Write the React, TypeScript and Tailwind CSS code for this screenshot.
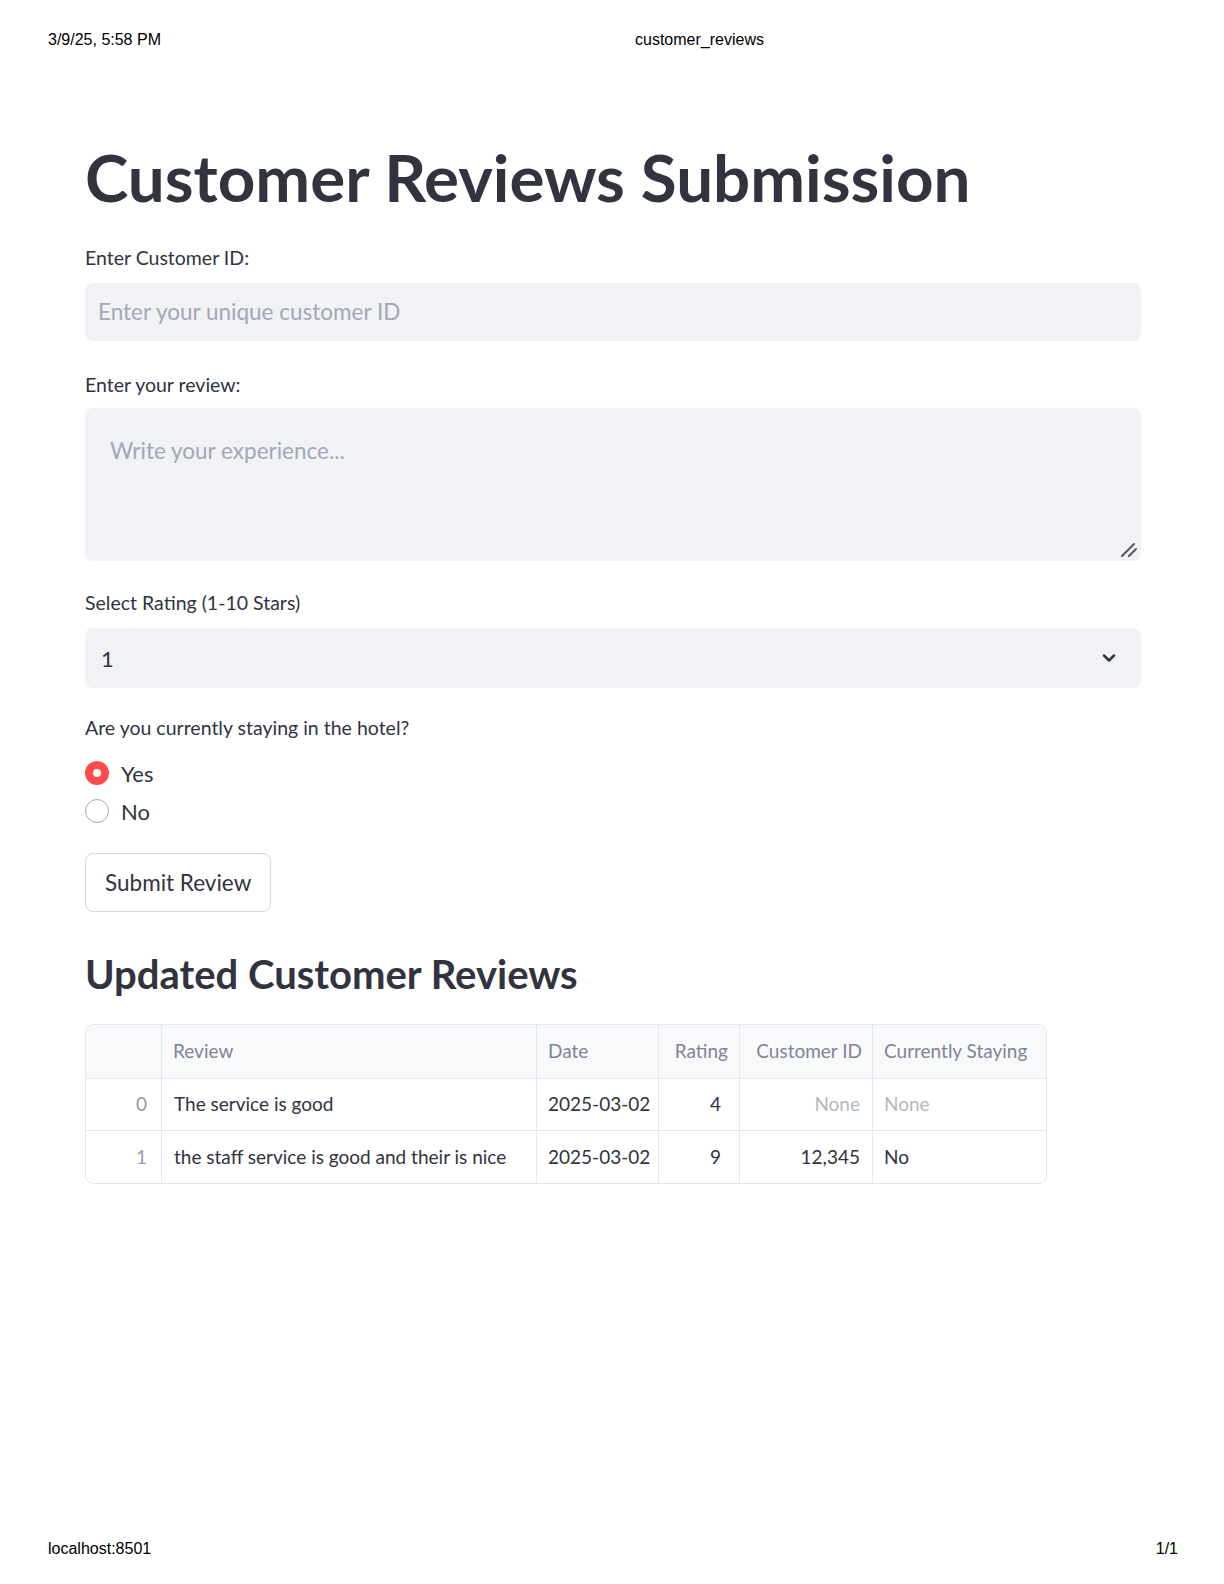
import { ChevronDown } from "lucide-react";

const font = { fontFamily: "Lato, 'Noto Sans', sans-serif" };
const chrome = { fontFamily: "'Liberation Sans', Arial, sans-serif" };

const rows = [
  { idx: 0, review: "The service is good", date: "2025-03-02", rating: 4, id: null, staying: null },
  { idx: 1, review: "the staff service is good and their is nice", date: "2025-03-02", rating: 9, id: "12,345", staying: "No" },
];

function Label({ children }: { children: React.ReactNode }) {
  return <div className="text-[19.5px] leading-[24px] text-[#31333f]">{children}</div>;
}

function Radio({ checked, label }: { checked?: boolean; label: string }) {
  return (
    <div className="flex h-[38px] items-center gap-[12px]">
      {checked ? (
        <span className="flex h-[24px] w-[24px] items-center justify-center rounded-full bg-[#ff4b4b]">
          <span className="h-[8px] w-[8px] rounded-full bg-white" />
        </span>
      ) : (
        <span className="h-[24px] w-[24px] rounded-full border-[1.5px] border-[#a3a8b4] bg-white" />
      )}
      <span className="text-[22px] text-[#31333f]">{label}</span>
    </div>
  );
}

const cell = "flex h-[52px] items-center whitespace-nowrap border-[#e4e7ec]";
const head = "flex h-[54px] items-center whitespace-nowrap border-b border-[#e4e7ec] bg-[#f8f9fb] text-[#808495]";

export default function App() {
  return (
    <div className="flex h-[1584px] flex-col bg-white" style={font}>
      <div className="relative flex h-[80px] items-center px-[48px] text-[16px] text-black" style={chrome}>
        <span>3/9/25, 5:58 PM</span>
        <span className="absolute left-[635px]">customer_reviews</span>
      </div>

      <main className="flex-1 pl-[85px] pr-[83px]">
        <h1 className="mt-[61px] text-[65.5px] font-bold leading-[72px] text-[#31333f]">
          Customer Reviews Submission
        </h1>

        <div className="mt-[33px]">
          <Label>Enter Customer ID:</Label>
          <div className="mt-[13px] flex h-[58px] items-center rounded-[8px] bg-[#f0f2f6] px-[13px] text-[22.5px] text-[#a3a8b4]">
            Enter your unique customer ID
          </div>
        </div>

        <div className="mt-[32px]">
          <Label>Enter your review:</Label>
          <div className="relative mt-[11px] h-[153px] rounded-[8px] bg-[#f0f2f6] px-[25px] pt-[28px] text-[22.5px] leading-[30px] text-[#a3a8b4]">
            Write your experience...
            <svg className="absolute bottom-[3px] right-[3px]" width="18" height="18" viewBox="0 0 18 18">
              <line x1="2" y1="16" x2="14" y2="4" stroke="#555" strokeWidth="2" strokeLinecap="round" />
              <line x1="9" y1="16" x2="16" y2="9" stroke="#555" strokeWidth="2" strokeLinecap="round" />
            </svg>
          </div>
        </div>

        <div className="mt-[30px]">
          <Label>Select Rating (1-10 Stars)</Label>
          <div className="mt-[13px] flex h-[60px] items-center justify-between rounded-[8px] bg-[#f0f2f6] pl-[16px] pr-[22px] text-[22px] text-[#31333f]">
            <span>1</span>
            <ChevronDown size={20} strokeWidth={3} color="#31333f" />
          </div>
        </div>

        <div className="mt-[28px]">
          <Label>Are you currently staying in the hotel?</Label>
          <div className="mt-[14px] flex flex-col">
            <Radio checked label="Yes" />
            <Radio label="No" />
          </div>
        </div>

        <button className="mt-[23px] flex h-[59px] items-center rounded-[8px] border border-[#d3d6dd] bg-white px-[19px] text-[22.5px] text-[#31333f]">
          Submit Review
        </button>

        <h2 className="mt-[37px] text-[40px] font-bold leading-[50px] text-[#31333f]">Updated Customer Reviews</h2>

        <div className="mt-[25px] w-[962px] overflow-hidden rounded-[8px] border border-[#e4e7ec]">
          <div className="grid grid-cols-[76px_375px_122px_81px_133px_1fr] text-[19px]">
            <div className={`${head} border-r`} />
            <div className={`${head} border-r px-[11px]`}>Review</div>
            <div className={`${head} border-r px-[11px]`}>Date</div>
            <div className={`${head} justify-end border-r px-[11px]`}>Rating</div>
            <div className={`${head} justify-end border-r px-[10px]`}>Customer ID</div>
            <div className={`${head} px-[11px]`}>Currently Staying</div>
            {rows.map((r, i) => {
              const b = i === 0 ? "border-b " : "";
              return [
                <div key={`i${i}`} className={`${b}${cell} justify-end border-r px-[14px] text-[#9a9ca6]`}>{r.idx}</div>,
                <div key={`r${i}`} className={`${b}${cell} border-r px-[12px] text-[#31333f]`}>{r.review}</div>,
                <div key={`d${i}`} className={`${b}${cell} border-r px-[11px] text-[#31333f]`}>{r.date}</div>,
                <div key={`g${i}`} className={`${b}${cell} justify-end border-r px-[18px] text-[#31333f]`}>{r.rating}</div>,
                <div key={`c${i}`} className={`${b}${cell} justify-end border-r px-[12px] ${r.id ? "text-[#31333f]" : "text-[#b4b7bf]"}`}>{r.id ?? "None"}</div>,
                <div key={`s${i}`} className={`${b}${cell} px-[11px] ${r.staying ? "text-[#31333f]" : "text-[#b4b7bf]"}`}>{r.staying ?? "None"}</div>,
              ];
            })}
          </div>
        </div>
      </main>

      <div className="flex h-[47px] items-start justify-between pl-[48px] pr-[46px] text-[16px] text-black" style={chrome}>
        <span>localhost:8501</span>
        <span>1/1</span>
      </div>
    </div>
  );
}
